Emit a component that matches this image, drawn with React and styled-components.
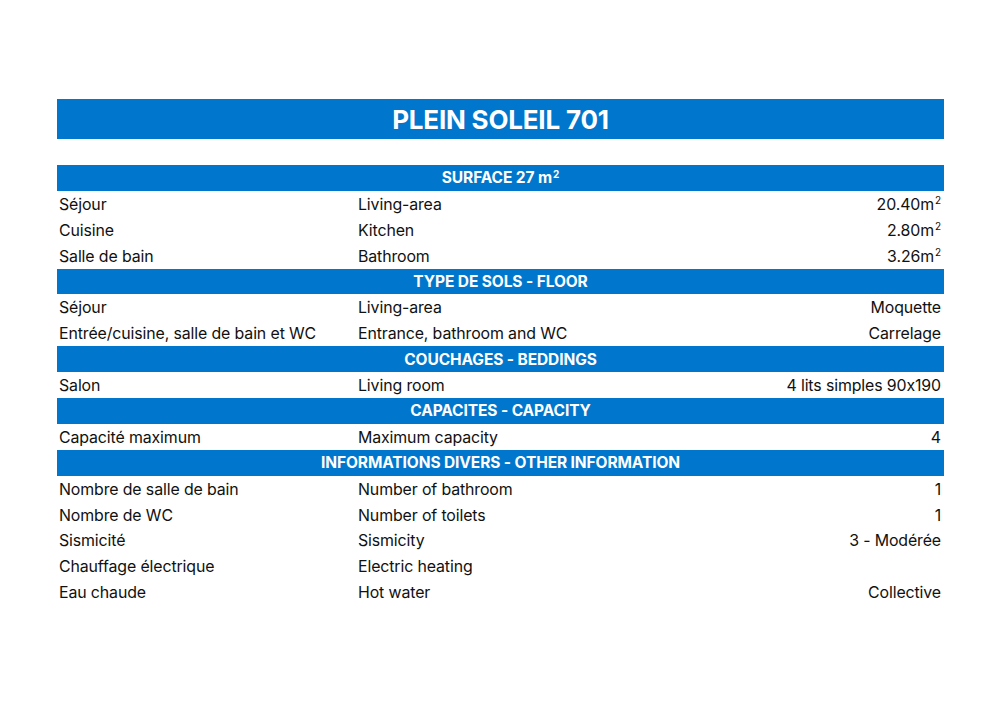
import React from 'react'
import styled, { createGlobalStyle } from 'styled-components'

const GlobalStyle = createGlobalStyle`
  body {
    margin: 0;
    background: #ffffff;
    font-family: Inter, 'Liberation Sans', sans-serif;
    color: #111111;
  }
`

const Page = styled.div`
  width: 1000px;
  height: 705px;
  padding: 99px 56px 0 57px;
  box-sizing: border-box;
`

const TitleBar = styled.div`
  height: 40px;
  background: #0077cc;
  color: #ffffff;
  display: flex;
  align-items: center;
  justify-content: center;
  font-size: 26px;
  font-weight: 700;
  letter-spacing: -0.2px;
  margin-bottom: 26px;
`

const Table = styled.div`
  display: grid;
  grid-template-columns: 299px 1fr auto;
  grid-auto-rows: 25.9px;
`

const Header = styled.div`
  grid-column: 1 / -1;
  background: #0077cc;
  color: #ffffff;
  font-weight: 700;
  font-size: 15.5px;
  display: flex;
  align-items: center;
  justify-content: center;
  letter-spacing: -0.1px;
`

const Cell = styled.div`
  display: flex;
  align-items: center;
  justify-content: ${p => (p.$right ? 'flex-end' : 'flex-start')};
  padding: ${p => (p.$right ? '1px 3px 0 0' : '1px 0 0 2px')};
  font-size: 15.9px;
  white-space: nowrap;
  letter-spacing: -0.12px;
`

const Sup = styled.sup`
  font-size: 10px;
  line-height: 0;
  position: relative;
  top: -4px;
  margin-left: 1px;
`

const sq = <>m<Sup>2</Sup></>

const sections = [
  {
    title: <>SURFACE 27 m<Sup>2</Sup></>,
    rows: [
      ['Séjour', 'Living-area', <>20.40{sq}</>],
      ['Cuisine', 'Kitchen', <>2.80{sq}</>],
      ['Salle de bain', 'Bathroom', <>3.26{sq}</>]
    ]
  },
  {
    title: 'TYPE DE SOLS - FLOOR',
    rows: [
      ['Séjour', 'Living-area', 'Moquette'],
      ['Entrée/cuisine, salle de bain et WC', 'Entrance, bathroom and WC', 'Carrelage']
    ]
  },
  {
    title: 'COUCHAGES - BEDDINGS',
    rows: [['Salon', 'Living room', '4 lits simples 90x190']]
  },
  {
    title: 'CAPACITES - CAPACITY',
    rows: [['Capacité maximum', 'Maximum capacity', '4']]
  },
  {
    title: 'INFORMATIONS DIVERS - OTHER INFORMATION',
    rows: [
      ['Nombre de salle de bain', 'Number of bathroom', '1'],
      ['Nombre de WC', 'Number of toilets', '1'],
      ['Sismicité', 'Sismicity', '3 - Modérée'],
      ['Chauffage électrique', 'Electric heating', ''],
      ['Eau chaude', 'Hot water', 'Collective']
    ]
  }
]

export default function App () {
  return (
    <Page>
      <GlobalStyle />
      <TitleBar>PLEIN SOLEIL 701</TitleBar>
      <Table>
        {sections.map((s, i) => (
          <React.Fragment key={i}>
            <Header>{s.title}</Header>
            {s.rows.map((r, j) => (
              <React.Fragment key={j}>
                <Cell>{r[0]}</Cell>
                <Cell>{r[1]}</Cell>
                <Cell $right>{r[2]}</Cell>
              </React.Fragment>
            ))}
          </React.Fragment>
        ))}
      </Table>
    </Page>
  )
}
